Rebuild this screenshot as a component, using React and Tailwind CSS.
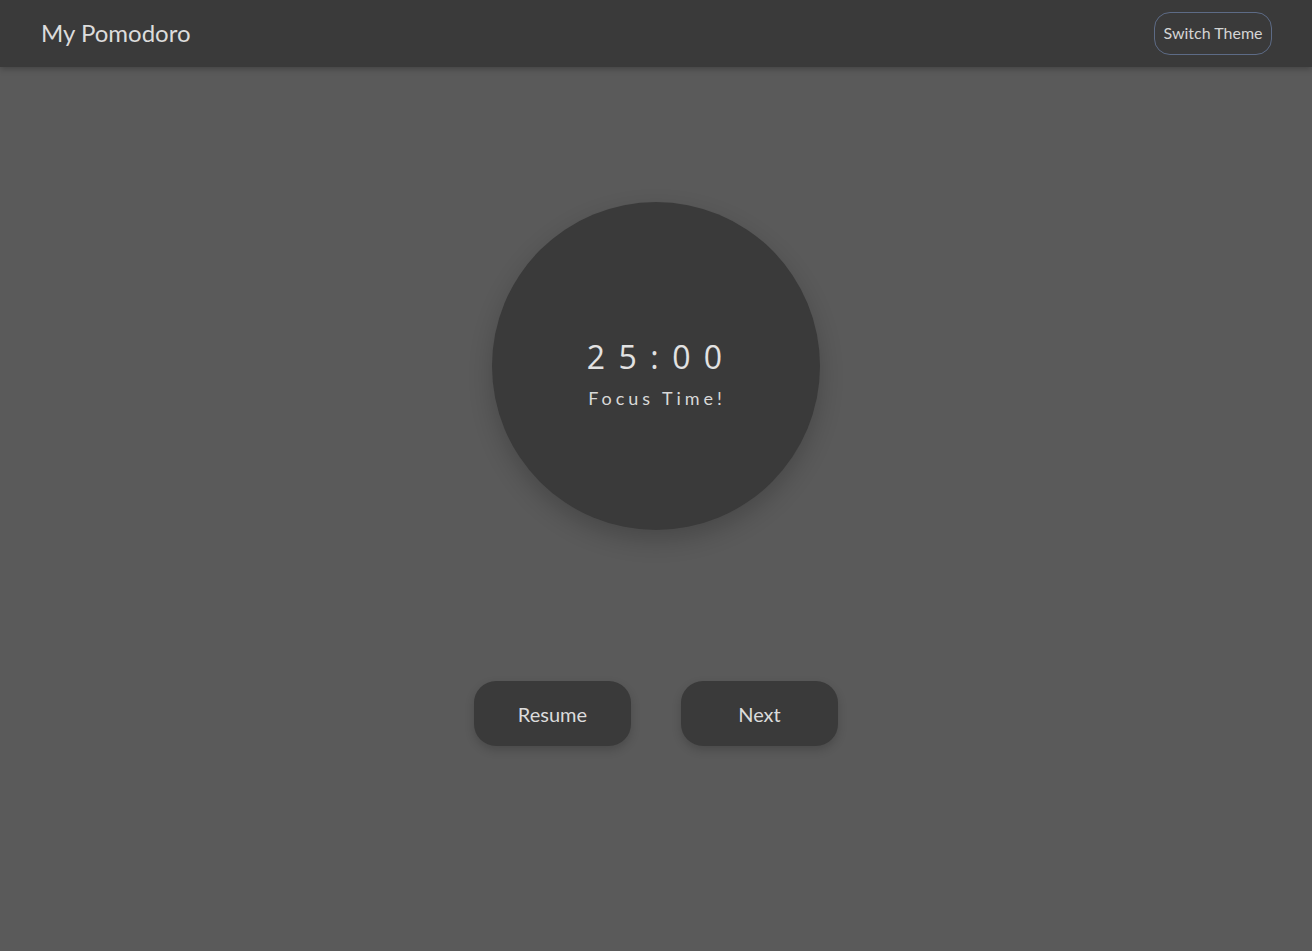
export default function App() {
  return (
    <div className="min-h-[951px] w-full bg-[#5a5a5a] flex flex-col" style={{ fontFamily: 'Lato, "Open Sans", sans-serif' }}>
      <header className="h-[67px] bg-[#3a3a3a] flex items-center justify-between pl-[41px] pr-[40px] shadow-[0_2px_6px_rgba(0,0,0,0.25)] relative z-10">
        <h1 className="text-[24px] text-[#dcdcdc] font-normal -mt-[2px]">My Pomodoro</h1>
        <button className="h-[43px] px-[8.5px] -mt-[1px] rounded-[16px] border border-[#5d6b86] text-[#d4d4d4] text-[16px]">Switch Theme</button>
      </header>
      <main className="flex flex-col items-center pt-[135px]">
        <div className="w-[328px] h-[328px] rounded-full bg-[#3a3a3a] flex flex-col items-center justify-center pt-[16px] shadow-[0_10px_25px_rgba(0,0,0,0.2)]">
          <div className="text-[32px] tracking-[0.42em] pl-[0.42em] text-[#e2e2e2] leading-none -ml-[3px]" style={{ fontFamily: '"Open Sans", sans-serif' }}>25:00</div>
          <div className="text-[18px] tracking-[0.22em] pl-[0.22em] text-[#d8d8d8] mt-[16px] leading-none -ml-[2px]">Focus Time!</div>
        </div>
        <div className="flex gap-[50px] mt-[151px]">
          <button className="w-[157px] h-[65px] rounded-[22px] bg-[#3a3a3a] text-[#dcdcdc] text-[20px] shadow-[0_4px_10px_rgba(0,0,0,0.18)]">Resume</button>
          <button className="w-[157px] h-[65px] rounded-[22px] bg-[#3a3a3a] text-[#dcdcdc] text-[20px] shadow-[0_4px_10px_rgba(0,0,0,0.18)]">Next</button>
        </div>
      </main>
    </div>
  );
}
